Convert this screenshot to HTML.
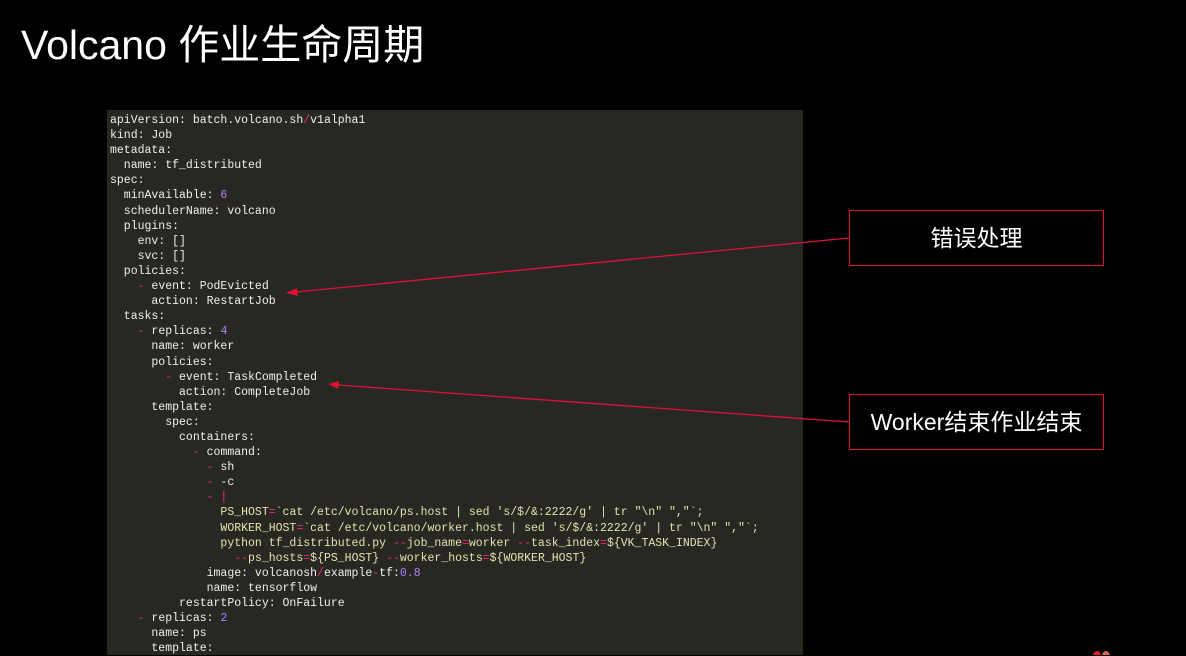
<!DOCTYPE html>
<html><head><meta charset="utf-8"><style>
body{margin:0;width:1186px;height:655px;background:#000;overflow:hidden;position:relative;font-family:"Liberation Sans","Noto Sans CJK SC",sans-serif;}
.title{position:absolute;left:21px;top:17px;color:#fff;font-size:41px;line-height:56px;white-space:nowrap;}
.code{position:absolute;left:107px;top:110px;width:696px;height:545px;background:#272822;}
pre{margin:0;position:absolute;left:3px;top:3px;font-family:"Liberation Mono",monospace;font-size:11.5px;line-height:15.1px;color:#f0f0ea;}
.r{color:#f92672}.n{color:#ae81ff}.s{color:#e6e1b0}
.box{position:absolute;left:849px;width:253px;height:54px;border:1.5px solid #e0103a;color:#fff;font-size:23px;text-align:center;line-height:54px;}
svg{position:absolute;left:0;top:0;}
</style></head><body>
<div class="title">Volcano 作业生命周期</div>
<div class="code"><pre>apiVersion: batch.volcano.sh<span class="r">/</span>v1alpha1
kind: Job
metadata:
  name: tf_distributed
spec:
  minAvailable: <span class="n">6</span>
  schedulerName: volcano
  plugins:
    env: []
    svc: []
  policies:
    <span class="r">-</span> event: PodEvicted
      action: RestartJob
  tasks:
    <span class="r">-</span> replicas: <span class="n">4</span>
      name: worker
      policies:
        <span class="r">-</span> event: TaskCompleted
          action: CompleteJob
      template:
        spec:
          containers:
            <span class="r">-</span> command:
              <span class="r">-</span> sh
              <span class="r">-</span> -c
              <span class="r">- |</span>
                <span class="s">PS_HOST<span class="r">=</span>`cat /etc/volcano/ps.host | sed 's/$/&amp;:2222/g' | tr "\n" ","`;</span>
                <span class="s">WORKER_HOST<span class="r">=</span>`cat /etc/volcano/worker.host | sed 's/$/&amp;:2222/g' | tr "\n" ","`;</span>
                <span class="s">python tf_distributed.py <span class="r">--</span>job_name<span class="r">=</span>worker <span class="r">--</span>task_index<span class="r">=</span>${VK_TASK_INDEX}</span>
                  <span class="s"><span class="r">--</span>ps_hosts<span class="r">=</span>${PS_HOST} <span class="r">--</span>worker_hosts<span class="r">=</span>${WORKER_HOST}</span>
              image: volcanosh<span class="r">/</span>example<span class="r">-</span>tf:<span class="n">0.8</span>
              name: tensorflow
          restartPolicy: OnFailure
    <span class="r">-</span> replicas: <span class="n">2</span>
      name: ps
      template:</pre></div>
<div class="box" style="top:210px">错误处理</div>
<div class="box" style="top:394px">Worker结束作业结束</div>
<svg width="1186" height="655">
<line x1="849" y1="238" x2="296" y2="292" stroke="#e0103a" stroke-width="1.3"/>
<polygon points="286,293 297,288 298,296" fill="#e0103a"/>
<line x1="849" y1="422" x2="338" y2="385" stroke="#e0103a" stroke-width="1.3"/>
<polygon points="328,384 339,381 338,389" fill="#e0103a"/>
<ellipse cx="1097" cy="656" rx="4" ry="5" fill="#e0201e"/>
<ellipse cx="1106" cy="656" rx="4" ry="5" fill="#e06060"/>
</svg>
</body></html>
